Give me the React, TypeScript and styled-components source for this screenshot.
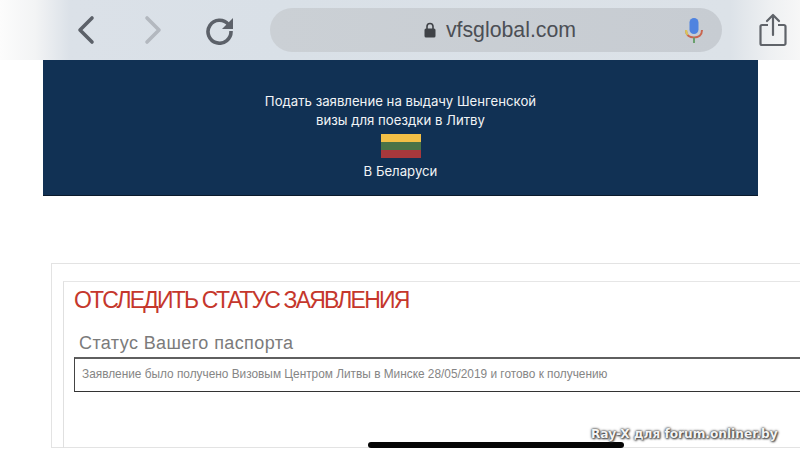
import React from 'react';
import styled, { createGlobalStyle } from 'styled-components';

const GlobalStyle = createGlobalStyle`
  html, body {
    margin: 0;
    padding: 0;
    background: #fff;
  }
`;

const Page = styled.div`
  position: relative;
  width: 800px;
  height: 458px;
  overflow: hidden;
  background: #fff;
  font-family: 'Liberation Sans', Arial, sans-serif;
`;

const Toolbar = styled.header`
  height: 60px;
  display: flex;
  align-items: center;
  background: linear-gradient(
    90deg,
    #fcfcfc 0,
    #f3f4f5 35px,
    #dbe1e8 70px,
    #d9e0e7 280px,
    #dce2e8 730px,
    #eef0f2 770px,
    #f7f7f7 800px
  );
`;

const NavIcon = styled.svg<{ $left: number }>`
  flex: none;
  margin-left: ${(p) => p.$left}px;
`;

const UrlBar = styled.div`
  flex: none;
  width: 452px;
  height: 44px;
  margin-left: 35px;
  border-radius: 22px;
  background: linear-gradient(90deg, #cbd0d5 0, #c7ccd2 100%);
  display: flex;
  align-items: center;
  justify-content: center;
  position: relative;
  color: #4c4f55;
  font-size: 21.3px;
`;

const Host = styled.div`
  display: flex;
  align-items: center;
  gap: 10px;
  margin-left: 8px;
`;

const Mic = styled.svg`
  position: absolute;
  right: 17px;
  top: 10px;
`;

const Banner = styled.section`
  box-sizing: border-box;
  width: 715px;
  height: 136px;
  margin-left: 43px;
  padding-top: 32px;
  background: #113154;
  border-bottom: 1px solid #0a1a2c;
  color: #f2f4f6;
  font-family: Inter, 'Liberation Sans', sans-serif;
  font-size: 13.2px;
  line-height: 18.5px;
  text-align: center;
`;

const Flag = styled.div`
  width: 40px;
  height: 24px;
  margin: 5px auto 4px;
  background: linear-gradient(180deg, #f2bf46 0 33%, #4a7347 33% 66%, #a8383c 66% 100%);
`;

const OuterPanel = styled.section`
  box-sizing: border-box;
  width: 749px;
  height: 185px;
  margin: 67px 0 0 51px;
  padding: 17px 0 0 11px;
  border-top: 1px solid #e3e3e3;
  border-left: 1px solid #e3e3e3;
  border-bottom: 1px solid #e3e3e3;
`;

const InnerPanel = styled.div`
  box-sizing: border-box;
  height: 167px;
  padding: 7px 0 0 10px;
  border-top: 1px solid #e6e6e6;
  border-left: 1px solid #e0e0e0;
`;

const Title = styled.h2`
  margin: 0;
  font-size: 23px;
  line-height: 22px;
  font-weight: 400;
  letter-spacing: -1.8px;
  white-space: nowrap;
  color: #c5372c;
`;

const SubTitle = styled.h3`
  margin: 22px 0 0 5px;
  font-size: 18px;
  line-height: 20px;
  font-weight: 400;
  letter-spacing: 0.4px;
  white-space: nowrap;
  color: #7b7b7b;
`;

const StatusBox = styled.div`
  box-sizing: border-box;
  height: 35px;
  margin-top: 4px;
  padding-left: 7px;
  padding-bottom: 2px;
  display: flex;
  align-items: center;
  border-top: 2px solid #5f5f5f;
  border-left: 1px solid #444;
  border-bottom: 1px solid #333;
  color: #858585;
  font-size: 11.85px;
  white-space: nowrap;
`;

const HomeIndicator = styled.div`
  position: absolute;
  left: 368px;
  top: 442px;
  width: 256px;
  height: 6px;
  border-radius: 3px;
  background: #050505;
`;

const Watermark = styled.div`
  position: absolute;
  left: 591px;
  top: 427px;
  color: #f4f4f4;
  font-family: 'DejaVu Sans', sans-serif;
  font-size: 12.15px;
  font-weight: 700;
  white-space: nowrap;
  text-shadow: 0 0 2px #333, 0 0 3px #555, 1px 1px 2px #444;
`;

export default function App() {
  return (
    <Page>
      <GlobalStyle />
      <Toolbar>
        <NavIcon $left={76} width="20" height="30" viewBox="0 0 20 30" fill="none">
          <path d="M16 3 4 15l12 12" stroke="#5c6169" strokeWidth="3.6" strokeLinecap="round" strokeLinejoin="round" />
        </NavIcon>
        <NavIcon $left={47} width="20" height="30" viewBox="0 0 20 30" fill="none">
          <path d="M4 3l12 12L4 27" stroke="#b3b8bf" strokeWidth="3.6" strokeLinecap="round" strokeLinejoin="round" />
        </NavIcon>
        <NavIcon $left={42} width="30" height="30" viewBox="0 0 30 30" fill="none">
          <path d="M23.5 9.5A11.5 11.5 0 1 0 26 16" stroke="#5c6169" strokeWidth="3.6" strokeLinecap="butt" />
          <path d="M28 3v11H17z" fill="#5c6169" />
        </NavIcon>
        <UrlBar>
          <Host>
            <svg width="12" height="16" viewBox="0 0 12 16">
              <path d="M3 7V4.500a3 3 0 0 1 6 0V7" fill="none" stroke="#3f4247" strokeWidth="1.6" />
              <rect x="0.5" y="6.5" width="11" height="9" rx="1.5" fill="#3f4247" />
            </svg>
            <span>vfsglobal.com</span>
          </Host>
          <Mic width="22" height="26" viewBox="0 0 22 26" fill="none">
            <rect x="6.500" y="0" width="9" height="16" rx="4.500" fill="#4f83e0" />
            <path d="M3 12c0 5 3.500 7.500 8 7.500s8-2.500 8-7.500" stroke="#c9654f" strokeWidth="2" />
            <path d="M3 12c0 2 .6 3.500 1.600 4.800" stroke="#d8c65a" strokeWidth="2" />
            <path d="M11 19.500V25" stroke="#6aa06d" strokeWidth="2" />
          </Mic>
        </UrlBar>
        <NavIcon $left={37} width="28" height="34" viewBox="0 0 28 34" fill="none">
          <path d="M9 12H3a1.500 1.500 0 0 0-1.500 1.500v17A1.500 1.500 0 0 0 3 32h22a1.500 1.500 0 0 0 1.500-1.500v-17A1.500 1.500 0 0 0 25 12h-6" stroke="#5f6369" strokeWidth="2.200" />
          <path d="M14 22V2M8 8l6-6 6 6" stroke="#5f6369" strokeWidth="2.200" strokeLinecap="round" strokeLinejoin="round" />
        </NavIcon>
      </Toolbar>

      <Banner>
        Подать заявление на выдачу Шенгенской
        <br />
        визы для поездки в Литву
        <Flag />В Беларуси
      </Banner>

      <OuterPanel>
        <InnerPanel>
          <Title>ОТСЛЕДИТЬ СТАТУС ЗАЯВЛЕНИЯ</Title>
          <SubTitle>Статус Вашего паспорта</SubTitle>
          <StatusBox>Заявление было получено Визовым Центром Литвы в Минске 28/05/2019 и готово к получению</StatusBox>
        </InnerPanel>
      </OuterPanel>

      <HomeIndicator />
      <Watermark>Ray-X для forum.onliner.by</Watermark>
    </Page>
  );
}
